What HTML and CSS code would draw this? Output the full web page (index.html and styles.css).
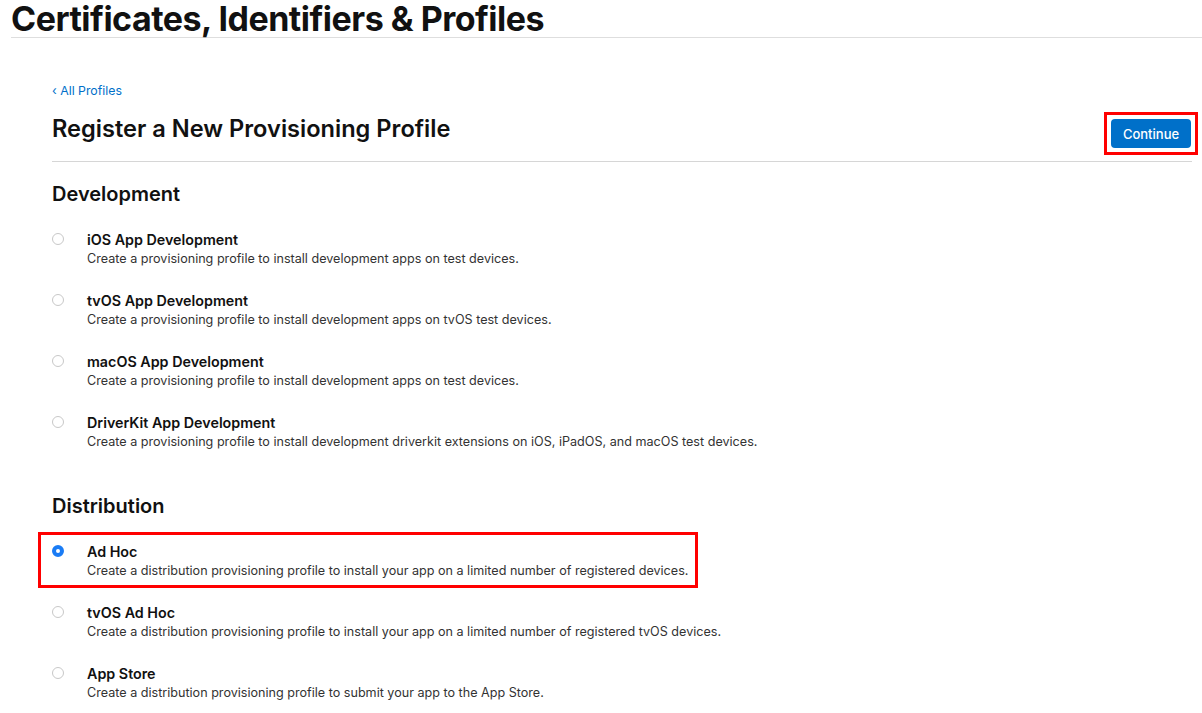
FILE: index.html
```html
<!DOCTYPE html>
<html>
<head>
<meta charset="utf-8">
<link rel="stylesheet" href="styles.css">
</head>
<body>
<header class="page-header">
  <h1 class="page-title">Certificates, Identifiers &amp; Profiles</h1>
</header>
<main class="content">
  <a class="back-link" href="#">&lsaquo; All Profiles</a>
  <div class="title-row">
    <h2 class="section-title">Register a New Provisioning Profile</h2>
    <div class="highlight highlight-btn">
      <button class="btn-primary">Continue</button>
    </div>
  </div>

  <section class="group">
    <h3 class="group-title">Development</h3>
    <div class="option">
      <span class="radio"></span>
      <div class="option-text">
        <div class="option-name">iOS App Development</div>
        <div class="option-desc">Create a provisioning profile to install development apps on test devices.</div>
      </div>
    </div>
    <div class="option">
      <span class="radio"></span>
      <div class="option-text">
        <div class="option-name">tvOS App Development</div>
        <div class="option-desc">Create a provisioning profile to install development apps on tvOS test devices.</div>
      </div>
    </div>
    <div class="option">
      <span class="radio"></span>
      <div class="option-text">
        <div class="option-name">macOS App Development</div>
        <div class="option-desc">Create a provisioning profile to install development apps on test devices.</div>
      </div>
    </div>
    <div class="option">
      <span class="radio"></span>
      <div class="option-text">
        <div class="option-name">DriverKit App Development</div>
        <div class="option-desc">Create a provisioning profile to install development driverkit extensions on iOS, iPadOS, and macOS test devices.</div>
      </div>
    </div>
  </section>

  <section class="group group-dist">
    <h3 class="group-title">Distribution</h3>
    <div class="option-wrap">
      <div class="option option-selected">
        <span class="radio radio-on"></span>
        <div class="option-text">
          <div class="option-name">Ad Hoc</div>
          <div class="option-desc">Create a distribution provisioning profile to install your app on a limited number of registered devices.</div>
        </div>
      </div>
      <div class="highlight highlight-row"></div>
    </div>
    <div class="option">
      <span class="radio"></span>
      <div class="option-text">
        <div class="option-name">tvOS Ad Hoc</div>
        <div class="option-desc">Create a distribution provisioning profile to install your app on a limited number of registered tvOS devices.</div>
      </div>
    </div>
    <div class="option">
      <span class="radio"></span>
      <div class="option-text">
        <div class="option-name">App Store</div>
        <div class="option-desc">Create a distribution provisioning profile to submit your app to the App Store.</div>
      </div>
    </div>
  </section>
</main>
</body>
</html>
```

FILE: styles.css
```css
html, body {
  margin: 0;
  padding: 0;
  background: #ffffff;
}
body {
  font-family: Inter, "Noto Sans", sans-serif;
  color: #1d1d1f;
  overflow: hidden;
}
.page-header {
  padding-left: 11px;
}
.page-title {
  margin: 0;
  font-size: 34px;
  font-weight: 700;
  line-height: 37px;
  letter-spacing: -0.5px;
  color: #111111;
  border-bottom: 1px solid #dedede;
}
.content {
  padding: 0 10px 0 52px;
}
.back-link {
  display: block;
  margin-top: 45px;
  font-size: 12.3px;
  line-height: 16px;
  color: #0070c9;
  text-decoration: none;
}
.title-row {
  display: flex;
  align-items: flex-start;
  justify-content: space-between;
  border-bottom: 1px solid #d6d6d6;
  padding: 15px 0 6px;
}
.section-title {
  margin: 0;
  font-size: 23.6px;
  font-weight: 600;
  line-height: 30px;
  color: #111111;
}
.highlight {
  border: 3px solid #ff0000;
  box-sizing: border-box;
}
.highlight-btn {
  padding: 4px;
  margin-top: -2px;
  margin-right: -6px;
}
.btn-primary {
  display: block;
  width: 80px;
  height: 29px;
  background: #0070c9;
  color: #ffffff;
  border: none;
  border-radius: 4px;
  font-family: Inter, "Noto Sans", sans-serif;
  font-size: 13px;
  font-weight: 500;
  padding: 0;
}
.group-title {
  margin: 0;
  font-size: 20px;
  font-weight: 600;
  line-height: 26px;
  color: #111111;
}
.group {
  padding-top: 19px;
}
.group .group-title {
  margin-bottom: 23px;
}
.group-dist {
  padding-top: 19px;
}
.option {
  display: flex;
  align-items: flex-start;
  gap: 23px;
  margin-bottom: 23px;
}
.radio {
  flex: none;
  width: 12px;
  height: 12px;
  box-sizing: border-box;
  border: 1px solid #c8c8c8;
  border-radius: 50%;
  margin-top: 3px;
  background: #ffffff;
}
.radio-on {
  border: 4px solid #1a7cf5;
  background: #ffffff;
}
.option-name {
  font-size: 14.3px;
  font-weight: 600;
  line-height: 19px;
  color: #111111;
}
.option-desc {
  margin-top: 1px;
  font-size: 12.6px;
  line-height: 18px;
  color: #333333;
}
.option-wrap {
  position: relative;
}
.highlight-row {
  position: absolute;
  left: -14px;
  top: -10px;
  width: 660px;
  height: 56px;
}
```
